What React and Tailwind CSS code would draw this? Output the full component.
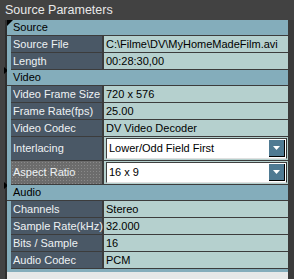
import React from "react";

const groups = [
    {
        title: "Source",
        rows: [
            { label: "Source File", value: "C:\\Filme\\DV\\MyHomeMadeFilm.avi" },
            { label: "Length", value: "00:28:30,00" },
        ],
    },
    {
        title: "Video",
        rows: [
            { label: "Video Frame Size", value: "720 x 576" },
            { label: "Frame Rate(fps)", value: "25.00" },
            { label: "Video Codec", value: "DV Video Decoder" },
            { label: "Interlacing", value: "Lower/Odd Field First", combo: true },
            { label: "Aspect Ratio", value: "16 x 9", combo: true, focused: true },
        ],
    },
    {
        title: "Audio",
        rows: [
            { label: "Channels", value: "Stereo" },
            { label: "Sample Rate(kHz)", value: "32.000" },
            { label: "Bits / Sample", value: "16" },
            { label: "Audio Codec", value: "PCM" },
        ],
    },
];

function Combo({ value }) {
    return (
        <div className="flex items-center h-[21px] w-full bg-white border-t border-l border-[#404040] border-b border-b-[#e0e0e0] border-r border-r-[#303030] pl-[2px]">
            <span className="flex-1 text-black">{value}</span>
            <div className="flex items-center justify-center w-[16px] h-[17px] mr-[1px] bg-[#4f7a92] border-r border-b border-black">
                <svg width="7" height="4" viewBox="0 0 7 4">
                    <polygon points="0,0 7,0 3.5,4" fill="#ffffff" />
                </svg>
            </div>
        </div>
    );
}

function Row({ row }) {
    const tall = row.combo;
    return (
        <div className={`flex border-b border-[#3c3c3c] ${tall ? "h-[24px]" : "h-[17px]"}`}>
            <div
                className={`w-[93px] shrink-0 flex items-center pl-[2px] text-[#eef2f4] border-r-2 border-[#3c3c3c] ${
                    row.focused
                        ? "bg-[#6c6c6c] bg-[radial-gradient(#8a8a8a_0.6px,transparent_0.8px)] bg-[length:3px_3px]"
                        : "bg-[#4a5866]"
                }`}
            >
                {row.label}
            </div>
            <div className="flex-1 min-w-0 flex items-center pl-[2px] pr-[1px] bg-[#b5d0ce] text-black">
                {row.combo ? <Combo value={row.value} /> : row.value}
            </div>
        </div>
    );
}

function Marker() {
    return (
        <svg width="4" height="7" viewBox="0 0 4 7" className="absolute left-[4px]">
            <polygon points="0,0 4,3.5 0,7" fill="#000000" />
        </svg>
    );
}

export default function App() {
    return (
        <div
            className="w-[294px] h-[279px] bg-[#424242] flex flex-col overflow-hidden text-[11px] leading-none whitespace-nowrap"
            style={{ fontFamily: "'Liberation Sans', Arial, sans-serif" }}
        >
            {/* Title */}
            <div className="h-[20px] shrink-0 flex items-center pl-[5px] text-[12.5px] text-[#e8e8e8]">
                Source Parameters
            </div>

            <div className="flex flex-1 min-h-0">
                {/* Left gutter with splitter markers */}
                <div className="relative w-[7px] shrink-0 border-r-2 border-[#2e2e2e]">
                    <div className="absolute top-[47px]"><Marker /></div>
                    <div className="absolute top-[162px]"><Marker /></div>
                </div>

                {/* Property grid */}
                <div className="relative w-[281px] shrink-0 flex flex-col">
                    <div className="absolute top-0 left-0 w-0 h-0 border-t-[6px] border-r-[6px] border-t-black border-r-transparent" />
                    {groups.map((g) => (
                        <div key={g.title} className="bg-[#84adbb]">
                            <div className="h-[16px] flex items-center pl-[6px] border-b border-[#3c3c3c] text-black">
                                {g.title}
                            </div>
                            <div className="pl-[4px]">
                                {g.rows.map((r) => (
                                    <Row key={r.label} row={r} />
                                ))}
                            </div>
                        </div>
                    ))}
                    <div className="h-[3px] bg-[#84adbb]" />
                    <div className="flex-1 bg-[#e6e8e8]" />
                </div>

                {/* Right gutter */}
                <div className="flex-1 bg-[#3a3a3a]" />
            </div>
        </div>
    );
}
